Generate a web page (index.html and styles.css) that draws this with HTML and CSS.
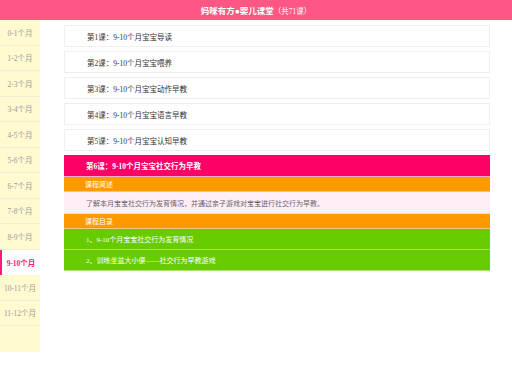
FILE: index.html
```html
<!DOCTYPE html>
<html lang="zh">

<head>
    <meta charset="UTF-8">
    <meta name="viewport" content="width=device-width, initial-scale=1.0">
    <title>妈咪有方 婴儿课堂</title>
    <link rel="stylesheet" href="styles.css">
</head>

<body>
    <div class="header">
        <span class="header-title">妈咪有方●婴儿课堂</span><span class="header-count">（共71课）</span>
    </div>
    <div class="page">
        <div class="side-menu">
            <div class="month">0-1个月</div>
            <div class="month">1-2个月</div>
            <div class="month">2-3个月</div>
            <div class="month">3-4个月</div>
            <div class="month">4-5个月</div>
            <div class="month">5-6个月</div>
            <div class="month">6-7个月</div>
            <div class="month">7-8个月</div>
            <div class="month">8-9个月</div>
            <div class="month active">9-10个月</div>
            <div class="month">10-11个月</div>
            <div class="month">11-12个月</div>
        </div>
        <div class="lessons">
            <div class="lesson">第1课：9-10个月宝宝导读</div>
            <div class="lesson">第2课：9-10个月宝宝喂养</div>
            <div class="lesson">第3课：9-10个月宝宝动作早教</div>
            <div class="lesson">第4课：9-10个月宝宝语言早教</div>
            <div class="lesson">第5课：9-10个月宝宝认知早教</div>
            <div class="lesson-open">
                <div class="open-title">第6课：9-10个月宝宝社交行为早教</div>
                <div class="section-bar">课程简述</div>
                <div class="summary">了解本月宝宝社交行为发育情况，并通过亲子游戏对宝宝进行社交行为早教。</div>
                <div class="section-bar">课程目录</div>
                <div class="chapter">1、9-10个月宝宝社交行为发育情况</div>
                <div class="chapter">2、训练坐盆大小便——社交行为早教游戏</div>
            </div>
        </div>
    </div>
</body>

</html>
```

FILE: styles.css
```css
* {
    box-sizing: border-box;
    margin: 0;
    padding: 0;
    font-family: "Liberation Serif", "Noto Sans CJK SC", serif;
}

body {
    width: 512px;
    background: #ffffff;
}

.header {
    height: 20px;
    background: #ff5783;
    color: #ffffff;

    display: flex;
    align-items: center;
    justify-content: center;
}

.header-title {
    font-size: 8.5px;
    font-weight: bold;
}

.header-count {
    font-size: 7.5px;
}

.page {
    display: flex;
    align-items: flex-start;
}

.side-menu {
    width: 40px;
    height: 332px;
    background: #fffad0;
}

.month {
    height: 25.5px;
    border-bottom: 1px solid #f3eed0;
    color: #999999;
    font-size: 7.5px;

    display: flex;
    align-items: center;
    justify-content: center;
}

.month.active {
    background: #ffffff;
    border-left: 2px solid #ff1a75;
    border-bottom: none;
    color: #ff1a75;
    font-weight: bold;
    font-size: 7.5px;
}

.lessons {
    width: 426px;
    margin-left: 24px;
    padding-top: 5px;

    display: flex;
    flex-direction: column;
    gap: 4px;
}

.lesson {
    height: 22px;
    border: 1px solid #efefef;
    padding-left: 22px;
    color: #333333;
    font-size: 7.5px;

    display: flex;
    align-items: center;
}

.lesson-open {
    display: flex;
    flex-direction: column;
}

.open-title {
    height: 22px;
    background: #ff0066;
    color: #ffffff;
    font-size: 7.5px;
    font-weight: bold;
    padding-left: 22px;
    border-bottom: 1px solid #ffb0cc;

    display: flex;
    align-items: center;
}

.section-bar {
    height: 15px;
    background: #ff9900;
    color: #ffffff;
    font-size: 7px;
    padding-left: 21px;
    border-bottom: 1px solid #ffc080;

    display: flex;
    align-items: center;
}

.summary {
    height: 22px;
    background: #ffeef8;
    color: #666666;
    font-size: 7px;
    padding-left: 22px;
    border-bottom: 1px solid #f8d8e4;

    display: flex;
    align-items: center;
}

.chapter {
    height: 21px;
    background: #66cc00;
    color: #ffffff;
    font-size: 7px;
    padding-left: 22px;
    border-bottom: 1px solid #a6e070;

    display: flex;
    align-items: center;
}
```
